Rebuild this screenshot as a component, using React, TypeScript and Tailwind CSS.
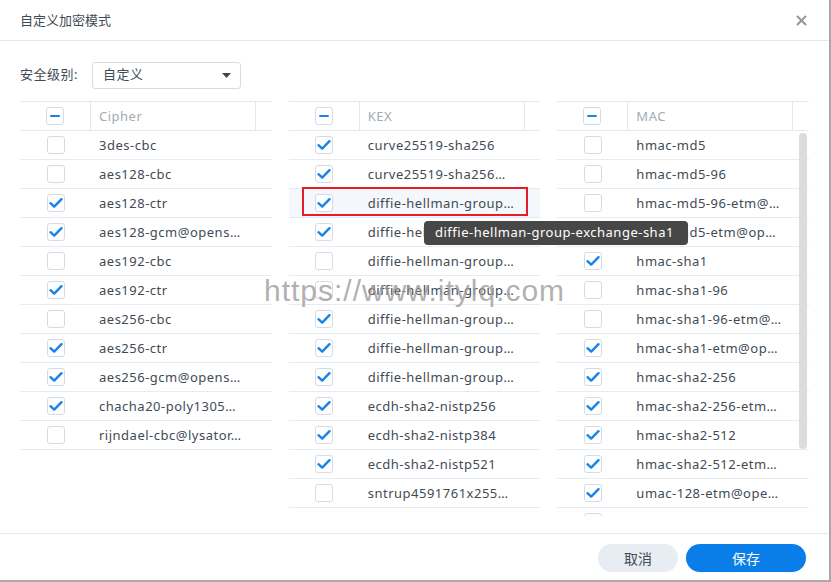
import React from "react";

type Row = { t: string; c: boolean; hl?: boolean };

const cipher: Row[] = [
  { t: "3des-cbc", c: false },
  { t: "aes128-cbc", c: false },
  { t: "aes128-ctr", c: true },
  { t: "aes128-gcm@openssh.com", c: true },
  { t: "aes192-cbc", c: false },
  { t: "aes192-ctr", c: true },
  { t: "aes256-cbc", c: false },
  { t: "aes256-ctr", c: true },
  { t: "aes256-gcm@openssh.com", c: true },
  { t: "chacha20-poly1305@openssh.com", c: true },
  { t: "rijndael-cbc@lysator.liu.se", c: false },
];

const kex: Row[] = [
  { t: "curve25519-sha256", c: true },
  { t: "curve25519-sha256@libssh.org", c: true },
  { t: "diffie-hellman-group-exchange-sha1", c: true, hl: true },
  { t: "diffie-hellman-group-exchange-sha256", c: true },
  { t: "diffie-hellman-group1-sha1", c: false },
  { t: "diffie-hellman-group14-sha1", c: false },
  { t: "diffie-hellman-group14-sha256", c: true },
  { t: "diffie-hellman-group16-sha512", c: true },
  { t: "diffie-hellman-group18-sha512", c: true },
  { t: "ecdh-sha2-nistp256", c: true },
  { t: "ecdh-sha2-nistp384", c: true },
  { t: "ecdh-sha2-nistp521", c: true },
  { t: "sntrup4591761x25519-sha512@tinyssh.org", c: false },
];

const mac: Row[] = [
  { t: "hmac-md5", c: false },
  { t: "hmac-md5-96", c: false },
  { t: "hmac-md5-96-etm@openssh.com", c: false },
  { t: "hmac-md5-etm@openssh.com", c: false },
  { t: "hmac-sha1", c: true },
  { t: "hmac-sha1-96", c: false },
  { t: "hmac-sha1-96-etm@openssh.com", c: false },
  { t: "hmac-sha1-etm@openssh.com", c: true },
  { t: "hmac-sha2-256", c: true },
  { t: "hmac-sha2-256-etm@openssh.com", c: true },
  { t: "hmac-sha2-512", c: true },
  { t: "hmac-sha2-512-etm@openssh.com", c: true },
  { t: "umac-128-etm@openssh.com", c: true },
  { t: "umac-128@openssh.com", c: true },
];

function Box({ state }: { state: "on" | "off" | "mixed" }) {
  return (
    <div className="w-[18px] h-[18px] rounded-[3px] border border-[#d3dce6] bg-white flex items-center justify-center">
      {state === "on" && (
        <svg width="14" height="12" viewBox="0 0 14 12">
          <path d="M1.5 6.2 L5.2 9.6 L12.5 2.2" fill="none" stroke="#1883e8" strokeWidth="2.4" strokeLinecap="round" strokeLinejoin="round" />
        </svg>
      )}
      {state === "mixed" && <div className="w-[10px] h-[2.5px] rounded-[1px] bg-[#1883e8]" />}
    </div>
  );
}

function Column({ title, rows, scroll, wide }: { title: string; rows: Row[]; scroll?: boolean; wide?: boolean }) {
  return (
    <div className="w-[252px] relative">
      <div className="flex h-[30px] border-t border-b border-[#e3e9ef] text-[#a3abb4]">
        <div className="w-[71px] border-r border-[#e3e9ef] flex items-center justify-center">
          <Box state="mixed" />
        </div>
        <div className="w-[165px] border-r border-[#e3e9ef] flex items-center pl-[8px] pt-[1px]">{title}</div>
      </div>
      <div className={scroll ? "h-[385px] overflow-hidden relative" : ""}>
        {rows.map((r, i) => (
          <div key={i} className={`flex h-[29px] border-b border-[#e6ebf0] ${r.hl ? "bg-[#f4f8fc]" : ""}`}>
            <div className="w-[71px] flex items-center justify-center">
              <Box state={r.c ? "on" : "off"} />
            </div>
            <div className={`${wide ? "w-[156px]" : "w-[153px]"} pl-[8px] flex items-center pt-[1px]`}>
              <span className="truncate block w-full">{r.t}</span>
            </div>
          </div>
        ))}
        {scroll && <div className="absolute left-[242px] top-[2px] w-[8px] h-[316px] rounded-full bg-[#dcdcdc]" />}
      </div>
    </div>
  );
}

export default function App() {
  return (
    <div
      className="relative w-[831px] h-[582px] bg-white border-r-2 border-b-2 border-[#a9a9a9] overflow-hidden text-[13px] text-[#414b55]"
      style={{ fontFamily: '"Noto Sans", "Noto Sans CJK SC", sans-serif' }}
    >
      <div className="h-[41px] border-b border-[#e3e9ef] flex items-center justify-between pl-[20px] pr-[22px] pt-[1px]">
        <span className="text-[13px] text-[#414b55]">自定义加密模式</span>
        <svg width="11" height="11" viewBox="0 0 11 11">
          <path d="M1 1 L10 10 M10 1 L1 10" stroke="#8f98a2" strokeWidth="2" />
        </svg>
      </div>
      <div className="h-[492px] px-[20px] pt-[21px] tracking-[0.5px]">
        <div className="flex items-center h-[26px]">
          <span className="w-[72px]">安全级别:</span>
          <div className="w-[149px] h-[27px] border border-[#d5dce4] rounded-[3px] flex items-center justify-between pl-[10px] pr-[9px]">
            <span>自定义</span>
            <svg width="9" height="5" viewBox="0 0 9 5">
              <path d="M0 0 L9 0 L4.5 5 Z" fill="#3f4750" />
            </svg>
          </div>
        </div>
        <div className="flex gap-[17px] mt-[13px]">
          <Column title="Cipher" rows={cipher} />
          <Column title="KEX" rows={kex} wide />
          <Column title="MAC" rows={mac} scroll />
        </div>
      </div>
      <div className="h-[47px] border-t border-[#e3e9ef] flex items-start justify-end gap-[8px] pt-[10px] pr-[23px]">
        <button className="w-[80px] h-[28px] rounded-full bg-[#e8edf3] text-[#414b55] text-[14px]">取消</button>
        <button className="w-[120px] h-[28px] rounded-full bg-[#0a7ee8] text-white text-[14px]">保存</button>
      </div>

      <div className="absolute left-[302px] top-[187px] w-[226px] h-[29px] border-2 border-[#e31e24]" />
      <div className="absolute left-[424px] top-[221px] h-[24px] w-[264px] px-[11px] rounded-[4px] bg-[#474747] text-white flex items-center tracking-[0.5px] whitespace-nowrap">
        diffie-hellman-group-exchange-sha1
      </div>
      <div
        className="absolute left-[264px] top-[268px] text-[30px] text-[#9c9c9c]/80 tracking-[1px] pointer-events-none"
        style={{ fontFamily: '"Liberation Sans", Arial, sans-serif' }}
      >
        https://www.itylq.com
      </div>
    </div>
  );
}
